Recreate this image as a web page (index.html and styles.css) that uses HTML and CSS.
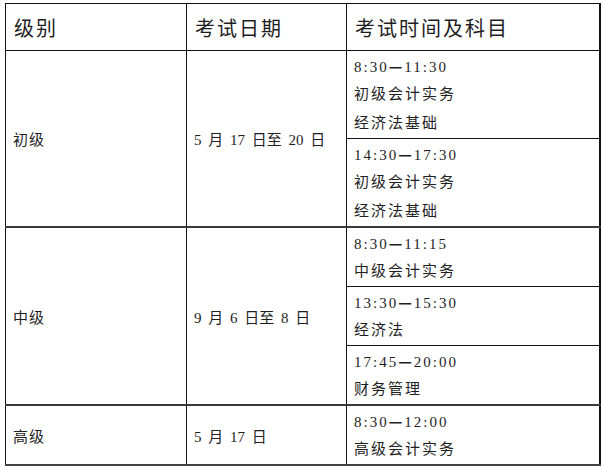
FILE: index.html
```html
<!DOCTYPE html>
<html lang="zh-CN">
<head>
<meta charset="utf-8">
<link rel="stylesheet" href="styles.css">
</head>
<body>
<table class="exam">
  <colgroup>
    <col class="c1"><col class="c2"><col class="c3">
  </colgroup>
  <thead>
    <tr class="head">
      <th>级别</th>
      <th>考试日期</th>
      <th>考试时间及科目</th>
    </tr>
  </thead>
  <tbody>
    <tr class="r3">
      <td rowspan="2" class="lvl">初级</td>
      <td rowspan="2" class="date">5 月 17 日至 20 日</td>
      <td class="slot"><div class="ln">8:30<span class="dash">—</span>11:30</div><div class="ln">初级会计实务</div><div class="ln">经济法基础</div></td>
    </tr>
    <tr class="r3">
      <td class="slot"><div class="ln">14:30<span class="dash">—</span>17:30</div><div class="ln">初级会计实务</div><div class="ln">经济法基础</div></td>
    </tr>
    <tr class="r2 sep">
      <td rowspan="3" class="lvl">中级</td>
      <td rowspan="3" class="date">9 月 6 日至 8 日</td>
      <td class="slot"><div class="ln">8:30<span class="dash">—</span>11:15</div><div class="ln">中级会计实务</div></td>
    </tr>
    <tr class="r2">
      <td class="slot"><div class="ln">13:30<span class="dash">—</span>15:30</div><div class="ln">经济法</div></td>
    </tr>
    <tr class="r2">
      <td class="slot"><div class="ln">17:45<span class="dash">—</span>20:00</div><div class="ln">财务管理</div></td>
    </tr>
    <tr class="r2 sep">
      <td class="lvl">高级</td>
      <td class="date">5 月 17 日</td>
      <td class="slot"><div class="ln">8:30<span class="dash">—</span>12:00</div><div class="ln">高级会计实务</div></td>
    </tr>
  </tbody>
</table>
</body>
</html>
```
FILE: styles.css
```css
html, body {
  margin: 0;
  padding: 0;
  background: #fff;
}
body {
  padding: 3px 0 0 5px;
  font-family: "Liberation Serif", "Noto Sans CJK SC", serif;
  color: #1e1e1e;
}
.exam {
  border-collapse: collapse;
  table-layout: fixed;
  width: 594px;
  border-top: 1px solid #111;
  border-left: 1px solid #111;
  border-right: 2px solid #111;
  border-bottom: 2px solid #444;
}
.c1 { width: 181px; }
.c2 { width: 160px; }
.c3 { width: 253px; }
.exam th,
.exam td {
  border: 1px solid #111;
  padding: 0 7px;
  text-align: left;
}
.exam th {
  height: 46px;
  font-family: "Noto Sans CJK SC", sans-serif;
  font-weight: 400;
  font-size: 20px;
  letter-spacing: 2px;
  vertical-align: middle;
  padding-left: 8px;
}
.lvl {
  font-family: "Noto Sans CJK SC", sans-serif;
  font-size: 15px;
  letter-spacing: 1px;
  vertical-align: middle;
  padding-left: 8px;
}
.date {
  font-size: 15px;
  word-spacing: 3px;
  vertical-align: middle;
  padding-top: 2px;
}
.slot {
  vertical-align: top;
  font-size: 15px;
  letter-spacing: 2px;
  padding-top: 5px;
}
.r3 .slot { height: 82px; }
.r2 .slot { height: 52px; }
.sep td { border-top: 2px solid #3a3a3a; }
.ln {
  height: 29px;
  line-height: 29px;
  white-space: nowrap;
}
.dash {
  font-family: "Noto Sans CJK SC", sans-serif;
  font-weight: 700;
  letter-spacing: 0;
  margin-right: 2px;
}
```
